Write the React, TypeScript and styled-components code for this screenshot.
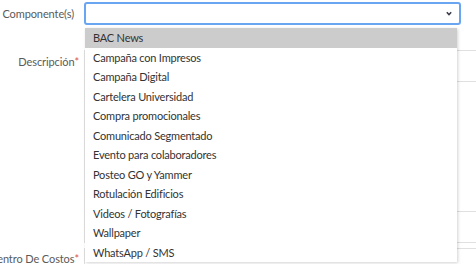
import React from "react";
import styled, { createGlobalStyle } from "styled-components";

const GlobalStyle = createGlobalStyle`
  html, body {
    margin: 0;
    padding: 0;
    background: #ffffff;
  }
  body {
    font-family: Lato, "Noto Sans", sans-serif;
    overflow: hidden;
  }
`;

const Page = styled.div`
  width: 476px;
  height: 264px;
  overflow: hidden;
  background: #fff;
`;

const Form = styled.div`
  width: 540px;
  padding-top: 2px;
  display: grid;
  grid-template-columns: 80px 1fr;
  column-gap: 4px;
  row-gap: 5px;
`;

const Label = styled.div<{ $top?: number }>`
  display: flex;
  justify-content: flex-end;
  padding-top: ${(p) => p.$top ?? 0}px;
  padding-right: 6px;
  font-size: 11px;
  letter-spacing: -0.1px;
  line-height: 16px;
  color: #5a5a5a;
  white-space: nowrap;
`;

const Star = styled.span`
  color: #d9534f;
  margin-right: -5px;
`;

const SelectWrap = styled.div`
  position: relative;
  width: 377px;
  margin-bottom: 20px;
`;

const SelectBox = styled.div`
  box-sizing: border-box;
  height: 23px;
  border: 2px solid #6aa5f2;
  border-radius: 3px;
  display: flex;
  align-items: center;
  justify-content: flex-end;
  padding-right: 7px;
  background: #fff;
`;

const Menu = styled.ul`
  position: absolute;
  top: 26px;
  left: 1px;
  width: 372px;
  margin: 0;
  padding: 0;
  list-style: none;
  background: #fff;
  box-shadow: 1px 1px 3px rgba(0, 0, 0, 0.18);
  z-index: 10;
`;

const Option = styled.li<{ $active?: boolean }>`
  height: 19.5px;
  line-height: 19.5px;
  padding-left: 8px;
  font-size: 11px;
  letter-spacing: -0.2px;
  color: #333;
  background: ${(p) => (p.$active ? "#cdcccd" : "#fff")};
  white-space: nowrap;
`;

const Editor = styled.div`
  box-sizing: border-box;
  height: 193px;
  border: 1px solid #e0e0e0;
  display: flex;
  flex-direction: column;
`;

const EditorBar = styled.div`
  height: 30px;
  border-bottom: 1px solid #e0e0e0;
`;

const EditorBody = styled.div`
  flex: 1;
`;

const EditorFoot = styled.div`
  height: 30px;
  border-top: 1px solid #e0e0e0;
`;

const Field = styled.div`
  box-sizing: border-box;
  height: 30px;
  border: 1px solid #e0e0e0;
`;

const options = [
  "BAC News",
  "Campaña con Impresos",
  "Campaña Digital",
  "Cartelera Universidad",
  "Compra promocionales",
  "Comunicado Segmentado",
  "Evento para colaboradores",
  "Posteo GO y Yammer",
  "Rotulación Edificios",
  "Videos / Fotografías",
  "Wallpaper",
  "WhatsApp / SMS",
];

const Chevron = () => (
  <svg width="6" height="5" viewBox="0 0 6 5">
    <polyline
      points="0.8,1.2 3,3.6 5.2,1.2"
      fill="none"
      stroke="#3a3a4a"
      strokeWidth="1.5"
    />
  </svg>
);

const App = () => {
  return (
    <Page>
      <GlobalStyle />
      <Form>
        <Label $top={4}>Componente(s)</Label>
        <SelectWrap>
          <SelectBox>
            <Chevron />
          </SelectBox>
          <Menu>
            {options.map((o, i) => (
              <Option key={o} $active={i === 0}>
                {o}
              </Option>
            ))}
          </Menu>
        </SelectWrap>

        <Label $top={4}>
          Descripción<Star>*</Star>
        </Label>
        <Editor>
          <EditorBar />
          <EditorBody />
          <EditorFoot />
        </Editor>

        <Label $top={3}>
          Centro De Costos<Star>*</Star>
        </Label>
        <Field />
      </Form>
    </Page>
  );
};

export default App;
